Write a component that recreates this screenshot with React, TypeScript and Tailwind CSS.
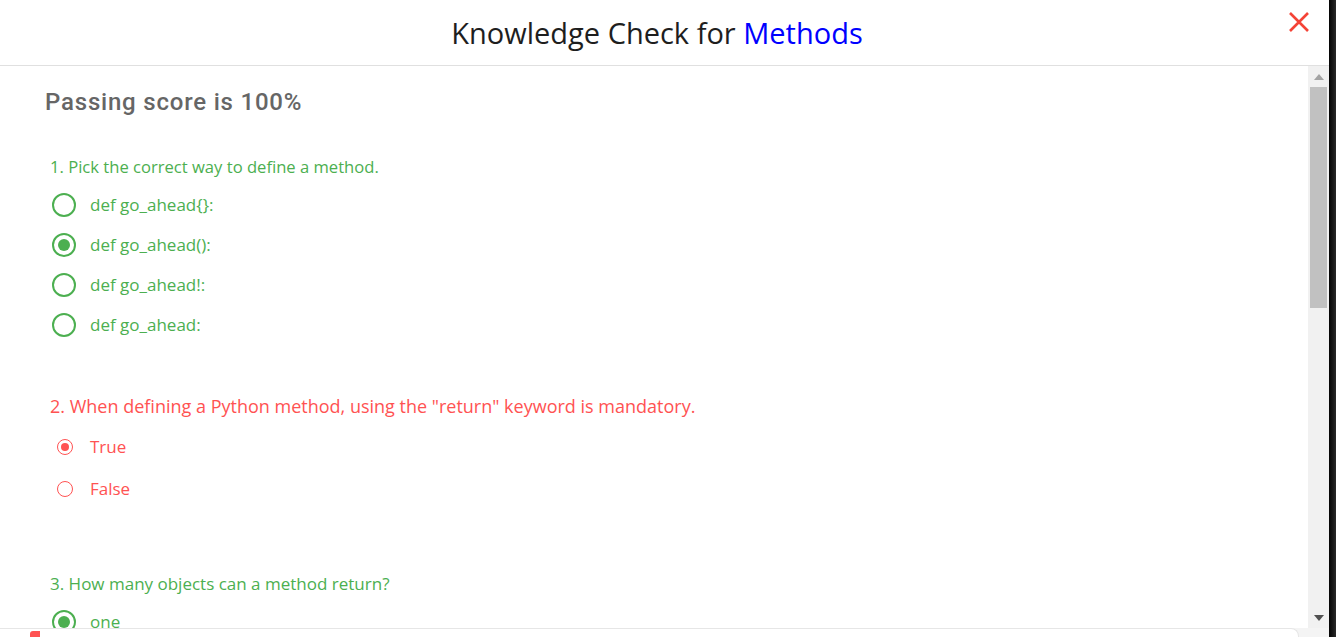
const GREEN = "text-[#4caf50]";

function BigRadio({ checked }: { checked?: boolean }) {
  return (
    <span className="flex h-[24px] w-[24px] shrink-0 items-center justify-center rounded-full border-[2.5px] border-[#4caf50]">
      {checked && <span className="h-[12px] w-[12px] rounded-full bg-[#4caf50]" />}
    </span>
  );
}

function SmallRadio({ checked }: { checked?: boolean }) {
  return (
    <span className="flex h-[16px] w-[16px] shrink-0 items-center justify-center rounded-full border-[1.8px] border-[#ff5252]">
      {checked && <span className="h-[8px] w-[8px] rounded-full bg-[#ff5252]" />}
    </span>
  );
}

function GreenOption({ label, checked }: { label: string; checked?: boolean }) {
  return (
    <div className="flex h-[40px] items-center pl-[7px]">
      <BigRadio checked={checked} />
      <span className={`ml-[14px] text-[17px] leading-[14px] ${GREEN}`}>{label}</span>
    </div>
  );
}

function RedOption({ label, checked }: { label: string; checked?: boolean }) {
  return (
    <div className="flex h-[42px] items-center pl-[12px]">
      <SmallRadio checked={checked} />
      <span className="ml-[17px] text-[17px] text-[#ff5252]">{label}</span>
    </div>
  );
}

function Scrollbar() {
  return (
    <div className="flex w-[21px] flex-col items-center bg-[#f1f1f1]">
      <div className="flex h-[21px] items-center justify-center">
        <svg width="10" height="6" viewBox="0 0 10 6">
          <path d="M0 6 L5 0 L10 6 Z" fill="#a3a3a3" />
        </svg>
      </div>
      <div className="h-[221px] w-[17px] bg-[#c1c1c1]" />
      <div className="flex-1" />
      <div className="flex h-[21px] items-center justify-center">
        <svg width="10" height="6" viewBox="0 0 10 6">
          <path d="M0 0 L10 0 L5 6 Z" fill="#505050" />
        </svg>
      </div>
    </div>
  );
}

export default function App() {
  return (
    <div className="flex h-[637px] w-[1336px] overflow-hidden bg-[#f4f4f4] font-['Open_Sans',sans-serif]">
      <div className="flex w-[1329px] flex-col">
        <div className="flex h-[628px] flex-col bg-white">
          <header className="relative flex h-[66px] shrink-0 items-center justify-center border-b border-[#e0e0e0] pr-[15px]">
            <h1 className="text-[29px] text-[#1e1e1e]">
              Knowledge Check for <span className="text-[#0000ff]">Methods</span>
            </h1>
            <button className="absolute right-[20px] top-[12px]" aria-label="Close">
              <svg width="20" height="20" viewBox="0 0 20 20">
                <path d="M1 1 L19 19 M19 1 L1 19" stroke="#f44336" strokeWidth="2.6" />
              </svg>
            </button>
          </header>
          <div className="flex min-h-0 flex-1">
            <div className="min-w-0 flex-1 overflow-hidden pl-[45px] pt-[18px]">
              <p className="font-['Roboto',sans-serif] text-[24px] font-medium tracking-[0.8px] text-[#666]">
                Passing score is 100%
              </p>
              <div className="mt-[35px] pl-[5px]">
                <p className={`text-[16.6px] ${GREEN}`}>1. Pick the correct way to define a method.</p>
                <div className="mt-[5px] -ml-[5px]">
                  <GreenOption label="def go_ahead{}:" />
                  <GreenOption label="def go_ahead():" checked />
                  <GreenOption label="def go_ahead!:" />
                  <GreenOption label="def go_ahead:" />
                </div>
              </div>
              <div className="mt-[48px] pl-[5px]">
                <p className="text-[18px] text-[#ff5252]">
                  2. When defining a Python method, using the "return" keyword is mandatory.
                </p>
                <div className="mt-[6px] -ml-[5px]">
                  <RedOption label="True" checked />
                  <RedOption label="False" />
                </div>
              </div>
              <div className="mt-[61px] pl-[5px]">
                <p className={`text-[17px] ${GREEN}`}>3. How many objects can a method return?</p>
                <div className="mt-[6px] -ml-[5px]">
                  <GreenOption label="one" checked />
                </div>
              </div>
            </div>
            <Scrollbar />
          </div>
        </div>
        <div className="flex flex-1">
          <div className="relative w-[1299px] rounded-tr-[8px] border-t border-r border-[#e6e6e6] bg-white">
            <div className="absolute left-[30px] top-[2px] h-[10px] w-[10px] rounded-tl-[3px] bg-[#ff5252]" />
          </div>
        </div>
      </div>
      <div className="flex-1 bg-gradient-to-r from-[#050505] to-[#2a2a2a]" />
    </div>
  );
}
